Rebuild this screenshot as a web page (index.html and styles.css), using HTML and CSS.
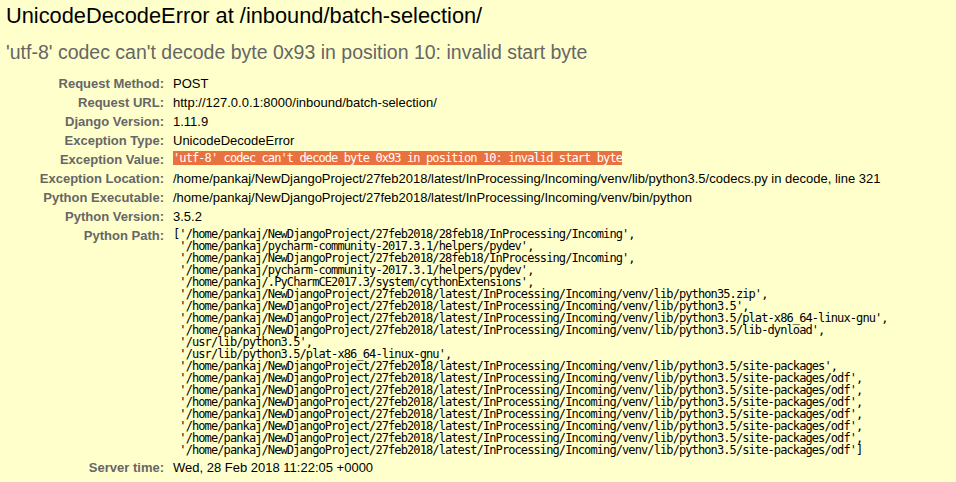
FILE: index.html
```html
<!DOCTYPE html>
<html lang="en">
<head>
<meta charset="utf-8">
<title>UnicodeDecodeError at /inbound/batch-selection/</title>
<link rel="stylesheet" href="styles.css">
</head>
<body>
<div class="summary">
  <h1 class="title">UnicodeDecodeError at /inbound/batch-selection/</h1>
  <p class="exception-value">'utf-8' codec can't decode byte 0x93 in position 10: invalid start byte</p>
  <table class="meta">
    <tbody>
      <tr><th>Request Method:</th><td>POST</td></tr>
      <tr><th>Request URL:</th><td>http://127.0.0.1:8000/inbound/batch-selection/</td></tr>
      <tr><th>Django Version:</th><td>1.11.9</td></tr>
      <tr><th>Exception Type:</th><td>UnicodeDecodeError</td></tr>
      <tr><th>Exception Value:</th><td><pre class="mono"><span class="selected">'utf-8' codec can't decode byte 0x93 in position 10: invalid start byte</span></pre></td></tr>
      <tr><th>Exception Location:</th><td>/home/pankaj/NewDjangoProject/27feb2018/latest/InProcessing/Incoming/venv/lib/python3.5/codecs.py in decode, line 321</td></tr>
      <tr><th>Python Executable:</th><td>/home/pankaj/NewDjangoProject/27feb2018/latest/InProcessing/Incoming/venv/bin/python</td></tr>
      <tr><th>Python Version:</th><td>3.5.2</td></tr>
      <tr><th>Python Path:</th><td><pre class="mono path">['/home/pankaj/NewDjangoProject/27feb2018/28feb18/InProcessing/Incoming',
 '/home/pankaj/pycharm-community-2017.3.1/helpers/pydev',
 '/home/pankaj/NewDjangoProject/27feb2018/28feb18/InProcessing/Incoming',
 '/home/pankaj/pycharm-community-2017.3.1/helpers/pydev',
 '/home/pankaj/.PyCharmCE2017.3/system/cythonExtensions',
 '/home/pankaj/NewDjangoProject/27feb2018/latest/InProcessing/Incoming/venv/lib/python35.zip',
 '/home/pankaj/NewDjangoProject/27feb2018/latest/InProcessing/Incoming/venv/lib/python3.5',
 '/home/pankaj/NewDjangoProject/27feb2018/latest/InProcessing/Incoming/venv/lib/python3.5/plat-x86_64-linux-gnu',
 '/home/pankaj/NewDjangoProject/27feb2018/latest/InProcessing/Incoming/venv/lib/python3.5/lib-dynload',
 '/usr/lib/python3.5',
 '/usr/lib/python3.5/plat-x86_64-linux-gnu',
 '/home/pankaj/NewDjangoProject/27feb2018/latest/InProcessing/Incoming/venv/lib/python3.5/site-packages',
 '/home/pankaj/NewDjangoProject/27feb2018/latest/InProcessing/Incoming/venv/lib/python3.5/site-packages/odf',
 '/home/pankaj/NewDjangoProject/27feb2018/latest/InProcessing/Incoming/venv/lib/python3.5/site-packages/odf',
 '/home/pankaj/NewDjangoProject/27feb2018/latest/InProcessing/Incoming/venv/lib/python3.5/site-packages/odf',
 '/home/pankaj/NewDjangoProject/27feb2018/latest/InProcessing/Incoming/venv/lib/python3.5/site-packages/odf',
 '/home/pankaj/NewDjangoProject/27feb2018/latest/InProcessing/Incoming/venv/lib/python3.5/site-packages/odf',
 '/home/pankaj/NewDjangoProject/27feb2018/latest/InProcessing/Incoming/venv/lib/python3.5/site-packages/odf',
 '/home/pankaj/NewDjangoProject/27feb2018/latest/InProcessing/Incoming/venv/lib/python3.5/site-packages/odf']</pre></td></tr>
      <tr><th>Server time:</th><td>Wed, 28 Feb 2018 11:22:05 +0000</td></tr>
    </tbody>
  </table>
</div>
</body>
</html>
```

FILE: styles.css
```css
html, body {
  margin: 0;
  padding: 0;
  background: #ffffcc;
}

body {
  font-family: "Liberation Sans", Arial, sans-serif;
  font-size: 13px;
  color: #000;
}

.summary {
  padding: 0 0 20px 6px;
  background: #ffffcc;
}

.title {
  margin: 0;
  padding-top: 3px;
  font-size: 21.8px;
  font-weight: normal;
  line-height: 26px;
}

.exception-value {
  margin: 12px 0 11px 0;
  font-size: 19.5px;
  line-height: 22px;
  color: #666;
}

.meta {
  border-collapse: collapse;
  border: none;
}

.meta th,
.meta td {
  vertical-align: top;
  padding: 2px 3px;
  line-height: 15px;
}

.meta th {
  width: 155px;
  text-align: right;
  color: #666;
  font-weight: bold;
  padding-right: 6px;
  white-space: nowrap;
}

.meta td {
  white-space: nowrap;
}

.mono {
  margin: 0;
  font-family: "DejaVu Sans Mono", monospace;
  font-size: 12px;
  letter-spacing: -0.9px;
  line-height: 13.5px;
}

.selected {
  background: #e9703f;
  color: #fff;
}

.path {
  line-height: 12px;
}
```
